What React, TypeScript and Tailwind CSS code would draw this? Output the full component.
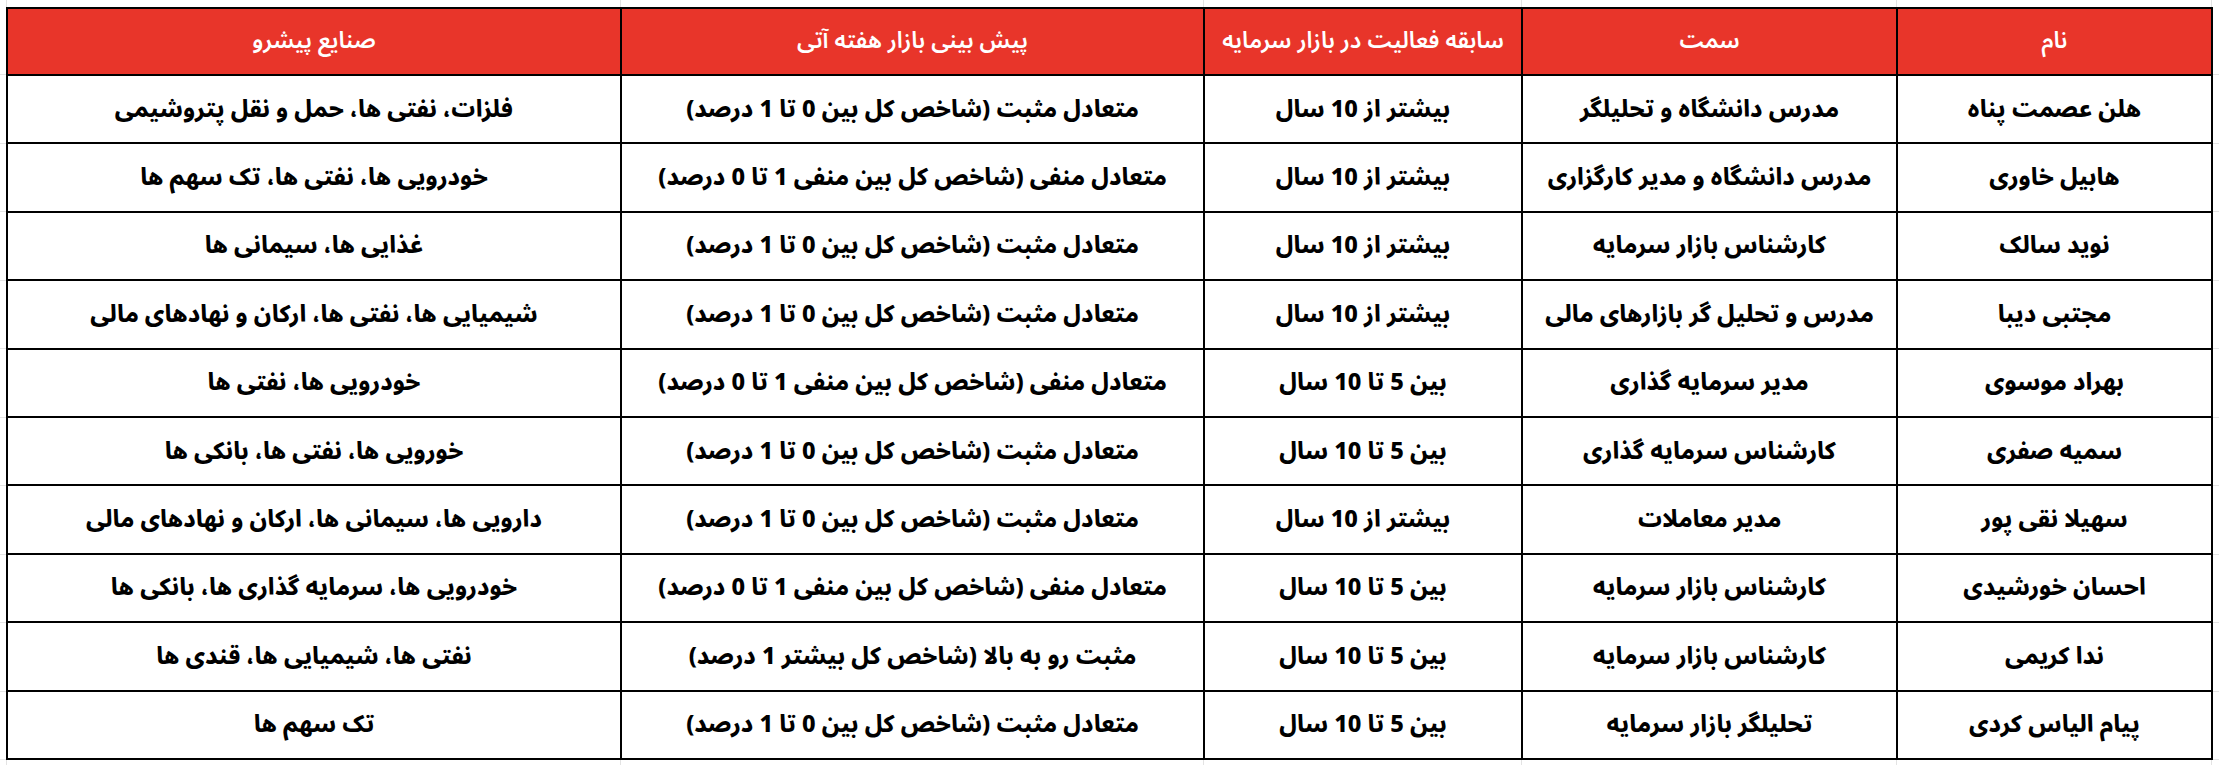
import React from "react";

const headers = ["نام", "سمت", "سابقه فعالیت در بازار سرمایه", "پیش بینی بازار هفته آتی", "صنایع پیشرو"];

const rows: string[][] = [
  ["هلن عصمت پناه", "مدرس دانشگاه و تحلیلگر", "بیشتر از 10 سال", "متعادل مثبت (شاخص کل بین 0 تا  1 درصد)", "فلزات، نفتی ها، حمل و نقل پتروشیمی"],
  ["هابیل خاوری", "مدرس دانشگاه و مدیر کارگزاری", "بیشتر از 10 سال", "متعادل منفی (شاخص کل بین منفی 1 تا 0 درصد)", "خودرویی ها، نفتی ها، تک سهم ها"],
  ["نوید سالک", "کارشناس بازار سرمایه", "بیشتر از 10 سال", "متعادل مثبت (شاخص کل بین 0 تا  1 درصد)", "غذایی ها، سیمانی ها"],
  ["مجتبی دیبا", "مدرس و تحلیل گر بازارهای مالی", "بیشتر از 10 سال", "متعادل مثبت (شاخص کل بین 0 تا  1 درصد)", "شیمیایی ها، نفتی ها، ارکان و نهادهای مالی"],
  ["بهراد موسوی", "مدیر سرمایه گذاری", "بین 5 تا 10 سال", "متعادل منفی (شاخص کل بین منفی 1 تا 0 درصد)", "خودرویی ها، نفتی ها"],
  ["سمیه صفری", "کارشناس سرمایه گذاری", "بین 5 تا 10 سال", "متعادل مثبت (شاخص کل بین 0 تا  1 درصد)", "خورویی ها، نفتی ها، بانکی ها"],
  ["سهیلا نقی پور", "مدیر معاملات", "بیشتر از 10 سال", "متعادل مثبت (شاخص کل بین 0 تا  1 درصد)", "دارویی ها، سیمانی ها، ارکان و نهادهای مالی"],
  ["احسان خورشیدی", "کارشناس بازار سرمایه", "بین 5 تا 10 سال", "متعادل منفی (شاخص کل بین منفی 1 تا 0 درصد)", "خودرویی ها، سرمایه گذاری ها، بانکی ها"],
  ["ندا کریمی", "کارشناس بازار سرمایه", "بین 5 تا 10 سال", "مثبت رو به بالا (شاخص کل بیشتر 1 درصد)", "نفتی ها، شیمیایی ها، قندی ها"],
  ["پیام الیاس کردی", "تحلیلگر بازار سرمایه", "بین 5 تا 10 سال", "متعادل مثبت (شاخص کل بین 0 تا  1 درصد)", "تک سهم ها"],
];

const colW = ["w-[315px]", "w-[375px]", "w-[318px]", "w-[583px]", "w-[614px]"];

const font = { fontFamily: '"Noto Sans Arabic", "DejaVu Sans", sans-serif' };

function VStrip({ grow }: { grow?: boolean }) {
  return (
    <div className={`flex ${grow ? "flex-1" : "h-[7px]"}`}>
      <div className="w-[6px] shrink-0" />
      <div className="w-[614px] shrink-0 border-l border-[#e3e3e3]" />
      <div className="w-[583px] shrink-0 border-l border-[#e3e3e3]" />
      <div className="w-[318px] shrink-0 border-l border-[#e3e3e3]" />
      <div className="w-[375px] shrink-0 border-l border-[#e3e3e3]" />
      <div className="w-[316px] shrink-0 border-l border-[#e3e3e3] border-r" />
      <div className="flex-1" />
    </div>
  );
}

function HStrip({ w }: { w: string }) {
  return (
    <div className={`${w} flex flex-col`}>
      <div className="h-[68px] border-b border-[#e3e3e3]" />
      {Array.from({ length: 10 }).map((_, i) => (
        <div key={i} className="h-[68.5px] border-b border-[#e3e3e3]" />
      ))}
    </div>
  );
}

export default function App() {
  return (
    <div className="w-[2219px] h-[765px] bg-white flex flex-col overflow-hidden" style={font}>
      <VStrip />
      <div className="flex">
        <HStrip w="w-[6px]" />
        <table dir="rtl" className="w-[2205px] border-collapse table-fixed">
          <thead>
            <tr className="h-[67px] bg-[#e8352a]">
              {headers.map((h, i) => (
                <th
                  key={i}
                  className={`${colW[i]} border-2 border-black text-white text-[23px] font-semibold text-center align-middle`}
                >
                  {h}
                </th>
              ))}
            </tr>
          </thead>
          <tbody>
            {rows.map((r, ri) => (
              <tr key={ri} className="h-[68.3px]">
                {r.map((c, ci) => (
                  <td
                    key={ci}
                    className="border-2 border-black text-black text-[23.5px] font-extrabold text-center align-middle whitespace-nowrap"
                  >
                    {c}
                  </td>
                ))}
              </tr>
            ))}
          </tbody>
        </table>
        <HStrip w="flex-1" />
      </div>
      <VStrip grow />
    </div>
  );
}
